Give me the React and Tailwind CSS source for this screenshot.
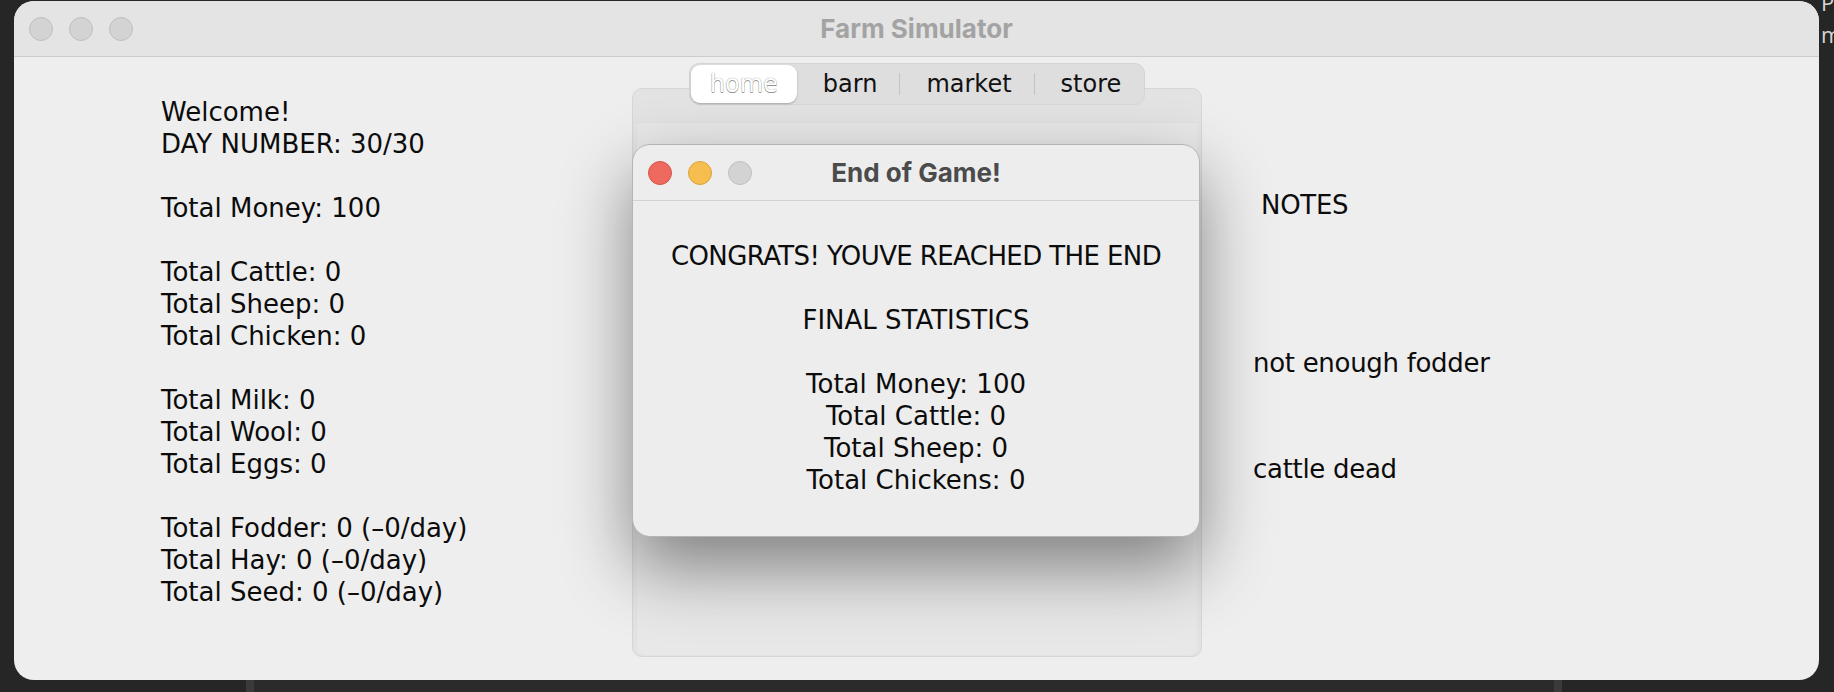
import React from "react";

const statLines = [
	"Welcome!",
	"DAY NUMBER: 30/30",
	"",
	"Total Money: 100",
	"",
	"Total Cattle: 0",
	"Total Sheep: 0",
	"Total Chicken: 0",
	"",
	"Total Milk: 0",
	"Total Wool: 0",
	"Total Eggs: 0",
	"",
	"Total Fodder: 0 (\u20130/day)",
	"Total Hay: 0 (\u20130/day)",
	"Total Seed: 0 (\u20130/day)",
];

const endLines = [
	"CONGRATS! YOUVE REACHED THE END",
	"",
	"FINAL STATISTICS",
	"",
	"Total Money: 100",
	"Total Cattle: 0",
	"Total Sheep: 0",
	"Total Chickens: 0",
];

const tabs = ["home", "barn", "market", "store"];

// Traffic light buttons, gray when the window is not focused
const Lights = ({ active }) => (
	<div className="flex gap-[16px]">
		<span
			className={
				active
					? "w-[24px] h-[24px] rounded-full bg-[#ee6a5e] border border-[#d35548]"
					: "w-[24px] h-[24px] rounded-full bg-[#d3d3d3] border border-[#bfbfbf]"
			}
		></span>
		<span
			className={
				active
					? "w-[24px] h-[24px] rounded-full bg-[#f5be4f] border border-[#d9a23d]"
					: "w-[24px] h-[24px] rounded-full bg-[#d3d3d3] border border-[#bfbfbf]"
			}
		></span>
		<span className="w-[24px] h-[24px] rounded-full bg-[#d3d3d3] border border-[#bfbfbf]"></span>
	</div>
);

const Lines = ({ lines }) =>
	lines.map((line, i) => (
		<p
			key={i}
			className={
				line.startsWith("CONGRATS")
					? "h-[32px] leading-[32px] whitespace-pre tracking-[-0.6px]"
					: "h-[32px] leading-[32px] whitespace-pre"
			}
		>
			{line || " "}
		</p>
	));

const TabBar = () => (
	<div className="relative z-10 mt-[6px] h-[42px] flex items-center p-[1px] rounded-[10px] bg-[#dedede] border border-[#d4d4d4] text-[24px] text-[#111]">
		{tabs.map((tab, i) => (
			<div
				key={tab}
				className="flex items-center h-full"
			>
				{i > 1 && <span className="w-[1px] h-[22px] bg-[#c3c3c3]"></span>}
				{i === 0 ? (
					<span className="h-full flex items-center px-[19px] rounded-[9px] bg-white shadow-[0_1px_2px_rgba(0,0,0,0.25)] text-white [text-shadow:0_0_1px_#6f6f6f,0_1px_0_#9a9a9a]">
						{tab}
					</span>
				) : (
					<span className="h-full flex items-center pl-[26px] pr-[22px]">{tab}</span>
				)}
			</div>
		))}
	</div>
);

const EndDialog = () => (
	<div className="absolute left-[618px] top-[87px] w-[568px] h-[393px] rounded-[18px] bg-[#ededed] border border-[#b4b4b4] shadow-[0_30px_70px_rgba(0,0,0,0.45)] overflow-hidden flex flex-col">
		<div className="h-[56px] shrink-0 grid grid-cols-[1fr_auto_1fr] items-center border-b border-[#d2d2d2] px-[15px]">
			<Lights active />
			<p className="font-['Inter',sans-serif] font-bold text-[26px] text-[#4b4b4b]">
				End of Game!
			</p>
			<span></span>
		</div>
		<div className="pt-[39px] text-center">
			<Lines lines={endLines} />
		</div>
	</div>
);

const App = () => {
	return (
		<div className="w-[1834px] h-[692px] bg-[#262626] overflow-hidden flex flex-col font-['DejaVu_Sans',sans-serif] text-[26px] text-[#0c0c0c]">
			<div className="flex h-[680px]">
				<div className="w-[14px] shrink-0"></div>

				<div className="w-[1805px] shrink-0 mt-[1px] rounded-[20px] bg-[#eeeeee] overflow-hidden flex flex-col">
					<div className="h-[56px] shrink-0 grid grid-cols-[1fr_auto_1fr] items-center bg-[#e4e4e4] border-b border-[#cccccc] px-[15px]">
						<Lights />
						<p className="font-['Inter',sans-serif] font-bold text-[26px] text-[#a3a3a3]">
							Farm Simulator
						</p>
						<span></span>
					</div>

					<div className="relative flex flex-1">
						<div className="w-[618px] shrink-0 pl-[147px] pt-[39px]">
							<Lines lines={statLines} />
						</div>

						<div className="w-[570px] shrink-0 flex flex-col items-center">
							<TabBar />
							<div className="-mt-[17px] w-full h-[569px] rounded-[10px] bg-[#e3e3e3] border border-[#d6d6d6] flex flex-col">
								<div className="h-[33px] shrink-0"></div>
								<div className="flex-1 mx-[4px] mb-[1px] rounded-b-[8px] bg-[#e8e8e8] border-t border-[#e0e0e0]"></div>
							</div>
						</div>

						<div className="pl-[51px] pt-[132px] tracking-[-0.3px]">
							<p className="pl-[8px] leading-[32px]">NOTES</p>
							<p className="mt-[126px] leading-[32px]">not enough fodder</p>
							<p className="mt-[74px] leading-[32px]">cattle dead</p>
						</div>

						<EndDialog />
					</div>
				</div>

				<div className="flex-1 pl-[2px] text-[#d6d6d6] text-[22px] leading-[28px] font-['Open_Sans',sans-serif] whitespace-nowrap">
					<p className="-mt-[12px]">Pe</p>
					<p className="mt-[4px]">m</p>
				</div>
			</div>

			<div className="flex-1 ml-[246px] w-[1316px] border-x-[8px] border-[#3a3a3a] bg-[#2b2b2b]"></div>
		</div>
	);
};

export default App;
